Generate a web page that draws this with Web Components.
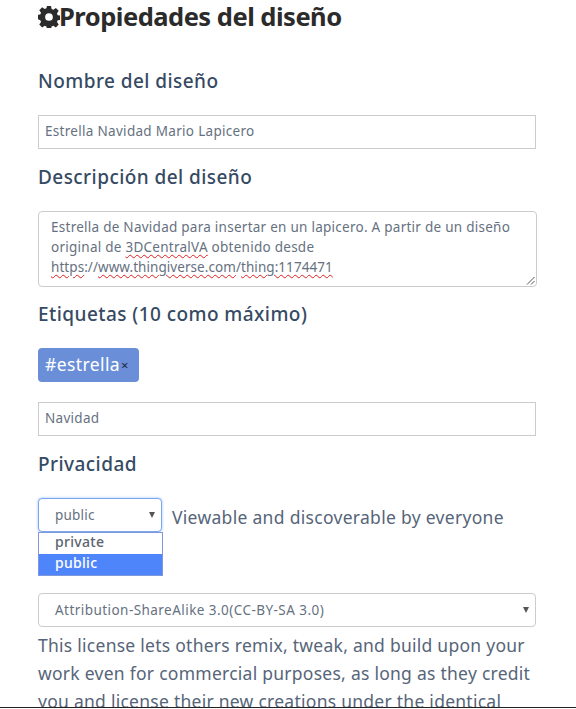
<!DOCTYPE html>
<html lang="es"><head><meta charset="utf-8"><title>Propiedades del diseño</title>
<style>
html,body{margin:0;padding:0;background:#fff;height:709px;overflow:hidden}
body{font-family:"Noto Sans","Liberation Sans",sans-serif;color:#4a5568}
</style></head><body>
<template id="t-page"><style>
:host{display:block;height:708px;box-sizing:border-box;border-bottom:1px solid #222;overflow:hidden;padding:0 40px 0 38px}
.title{display:flex;align-items:center;gap:0;height:30px;margin-top:1px;font-size:25.500px;font-weight:700;color:#2b2b2b;letter-spacing:-.5px}
svg{width:22px;height:22px;flex:none;fill:#2b2b2b;margin:2px -1px 0 0}
</style><div class="title"><svg viewBox="0 0 24 24"><path fill-rule="evenodd" d="M9.800 0h4.400l.6 3.300 1.900.8L19.500 2.200l3.100 3.100-1.900 2.800.8 1.900 3.300.6v4.400l-3.300.6-.8 1.900 1.900 2.800-3.100 3.100-2.800-1.900-1.900.8-.6 3.300H9.800l-.6-3.300-1.900-.8-2.800 1.900-3.100-3.100 1.900-2.800-.8-1.900L-.800 14.200V9.800l3.300-.6.8-1.900L1.400 4.500 4.500 1.400l2.800 1.900 1.900-.8zM12 7.800a4.200 4.200 0 1 0 0 8.400 4.200 4.200 0 0 0 0-8.400z"/></svg><span>Propiedades del diseño</span></div><slot></slot></template>
<template id="t-head"><style>:host{display:block;font-size:19px;font-weight:500;line-height:26px;color:#364a63;letter-spacing:.44px}</style><slot></slot></template>
<template id="t-box"><style>:host{display:block;box-sizing:border-box;width:498px;height:34px;border:1px solid #ccc;padding:0 6px;font-size:13.500px;line-height:31px;color:#66717f;letter-spacing:.3px}</style><slot></slot></template>
<template id="t-area"><style>:host{display:block;position:relative;box-sizing:border-box;width:499px;height:76px;border:1px solid #ccc;border-radius:4px;padding:5px 12px;font-size:13.500px;line-height:20px;color:#66717f;letter-spacing:.26px}
svg{position:absolute;right:1px;bottom:1px;width:9px;height:9px}</style><slot></slot><svg viewBox="0 0 9 9"><path d="M1 8.500 8.500 1M5 8.500 8.500 5" stroke="#555" fill="none"/></svg></template>
<template id="t-tag"><style>:host{display:inline-flex;align-items:center;box-sizing:border-box;height:34px;width:101px;padding:0 0 2px 7px;background:#6a8fd8;border-radius:4px;color:#fff;font-size:17.500px;letter-spacing:.4px}
i{font:normal 13px "Noto Sans",sans-serif;color:#1f2740;margin:2px 0 0 1px;letter-spacing:0}</style><slot></slot><i>×</i></template>
<template id="t-select"><style>:host{display:block;position:relative;box-sizing:border-box;height:34px;border:1px solid #ccc;border-radius:4px;padding:0 16px;font-size:13.500px;line-height:32px;color:#66717f;background:#fff;letter-spacing:.2px}
:host([focused]){border-color:#7aa7ee;box-shadow:0 0 3px #9cc0f5}
b{position:absolute;right:6px;top:13px;width:0;height:0;border:3.500px solid transparent;border-top:6px solid #555;border-bottom:0}</style><slot></slot><b></b></template>
<template id="t-list"><style>:host{display:block;position:absolute;left:0;top:34px;box-sizing:border-box;width:125px;border:1px solid #7f97dc;background:#fff;font-size:14px;font-weight:500;color:#5b6470;letter-spacing:.3px}
div{height:21px;line-height:18px;padding-left:16px}.on{background:#4f85fb;color:#fff}</style><div>private</div><div class="on">public</div></template>
<template id="t-privacy"><style>:host{display:flex;align-items:center;position:relative;height:34px;gap:10px;font-size:17.500px;color:#566579;letter-spacing:.3px}
.w{position:relative;width:124px;flex:none}::slotted(span){margin-top:3px}</style><div class="w"><slot name="sel"></slot></div><slot></slot></template>
<template id="t-copy"><style>:host{display:block;font-size:17.500px;line-height:28px;color:#566579;width:500px;letter-spacing:.26px}</style><slot></slot></template>
<script>
for(const [tag,id] of [['x-page','t-page'],['x-head','t-head'],['x-box','t-box'],['x-area','t-area'],['x-tag','t-tag'],['x-select','t-select'],['x-list','t-list'],['x-privacy','t-privacy'],['x-copy','t-copy']]){
 customElements.define(tag,class extends HTMLElement{constructor(){super();this.attachShadow({mode:'open'}).append(document.getElementById(id).content.cloneNode(true))}});
}
</script>
<style>.sp{text-decoration:underline wavy #e02020 1px;text-underline-offset:2px}</style>
<x-page>
<x-head style="margin-top:37px">Nombre del diseño</x-head>
<x-box style="margin-top:21px">Estrella Navidad Mario Lapicero</x-box>
<x-head style="margin-top:15px">Descripción del diseño</x-head>
<x-area style="margin-top:21px">Estrella de Navidad para insertar en un lapicero. A partir de un diseño original de <span class="sp">3DCentralVA</span> obtenido desde<br><span style="letter-spacing:.06px"><span class="sp">https</span>://<span class="sp">www.thingiverse.com</span>/<span class="sp">thing:1174471</span></span></x-area>
<x-head style="margin-top:14px">Etiquetas (10 como máximo)</x-head>
<div style="margin-top:21px;height:34px"><x-tag>#estrella</x-tag></div>
<x-box style="margin-top:20px">Navidad</x-box>
<x-head style="margin-top:15px">Privacidad</x-head>
<x-privacy style="margin-top:21px"><div slot="sel"><x-select focused>public</x-select><x-list></x-list></div><span>Viewable and discoverable by everyone</span></x-privacy>
<x-select style="margin-top:61px;width:498px;letter-spacing:.45px">Attribution-ShareAlike 3.0(CC-BY-SA 3.0)</x-select>
<x-copy style="margin-top:4px">This license lets others remix, tweak, and build upon your work even for commercial purposes, as long as they credit you and license their new creations under the identical terms.</x-copy>
</x-page>
</body></html>
